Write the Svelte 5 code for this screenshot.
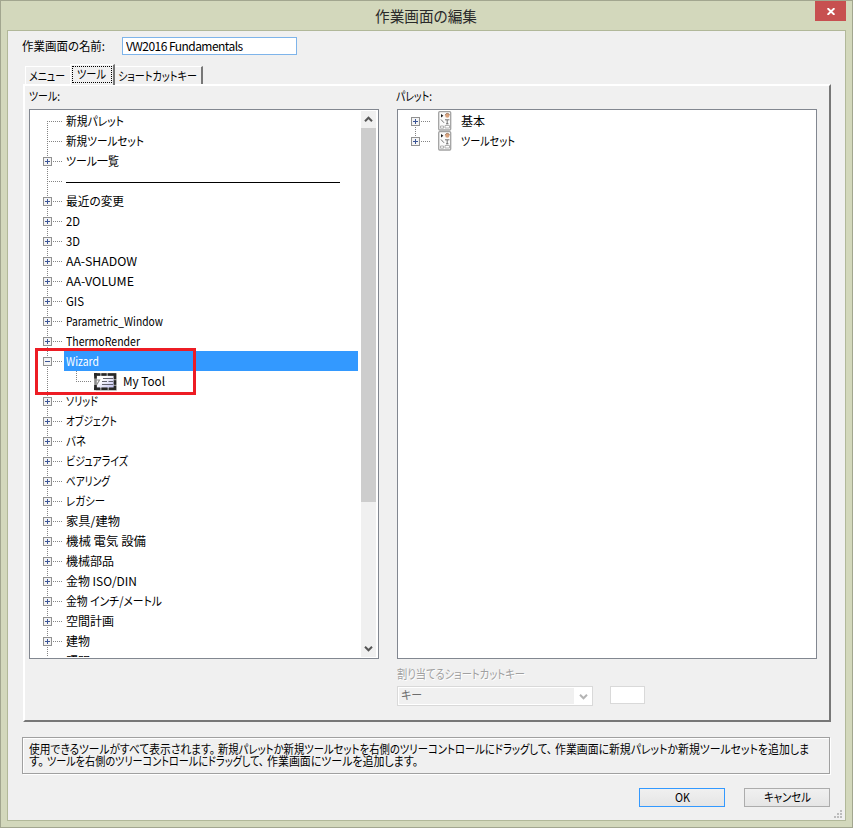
<script lang="ts">
  interface TreeItem {
    label: string;
    width: number;
    leaf?: boolean;
    separator?: boolean;
    child?: boolean;
  }

  const tools: TreeItem[] = [
    { label: '新規パレット', width: 58, leaf: true },
    { label: '新規ツールセット', width: 78, leaf: true },
    { label: 'ツール一覧', width: 53 },
    { label: '', width: 0, leaf: true, separator: true },
    { label: '最近の変更', width: 58 },
    { label: '2D', width: 14 },
    { label: '3D', width: 14 },
    { label: 'AA-SHADOW', width: 71 },
    { label: 'AA-VOLUME', width: 68 },
    { label: 'GIS', width: 18 },
    { label: 'Parametric_Window', width: 97 },
    { label: 'ThermoRender', width: 74 },
    { label: 'Wizard', width: 33 },
    { label: 'My Tool', width: 42, child: true },
    { label: 'ソリッド', width: 32 },
    { label: 'オブジェクト', width: 51 },
    { label: 'バネ', width: 20 },
    { label: 'ビジュアライズ', width: 62 },
    { label: 'ベアリング', width: 44 },
    { label: 'レガシー', width: 39 },
    { label: '家具/建物', width: 54 },
    { label: '機械 電気 設備', width: 80 },
    { label: '機械部品', width: 48 },
    { label: '金物 ISO/DIN', width: 71 },
    { label: '金物 インチ/メートル', width: 96 },
    { label: '空間計画', width: 48 },
    { label: '建物', width: 24 },
    { label: '照明', width: 24 }
  ];

  const palettes = [
    { label: '基本', width: 24 },
    { label: 'ツールセット', width: 54 }
  ];

  const help = [
    [
      { text: '使用できるツールがすべて表示されます。', width: 186 },
      { text: '新規パレットか新規ツールセットを右側のツリーコントロールにドラッグして、', width: 334 },
      { text: '作業画面に新規パレットか新規ツールセットを追加しま', width: 254 }
    ],
    [
      { text: 'す。', width: 15 },
      { text: 'ツールを右側のツリーコントロールにドラッグして、', width: 217 },
      { text: '作業画面にツールを追加します。', width: 151 }
    ]
  ];

  let activeTab = $state('ツール');
  let workspaceName = $state('VW2016 Fundamentals');
  let selected = $state('Wizard');

  // Condense a label to the width the dialog font would give it
  function fit(node: HTMLElement, width: number) {
    const natural = node.getBoundingClientRect().width;
    if (natural > 0) {
      node.style.transform = `scaleX(${width / natural})`;
      node.style.marginRight = `${width - natural}px`;
    }
  }
</script>

{#snippet expander(open: boolean)}
  <svg class="expander" width="9" height="9" viewBox="0 0 9 9" shape-rendering="crispEdges">
    <rect x="0.5" y="0.5" width="8" height="8" fill="#f4f4f4" stroke="#919191" />
    <path d="M2 4.5h5" stroke="#3c5596" />
    {#if !open}<path d="M4.5 2v5" stroke="#3c5596" />{/if}
  </svg>
{/snippet}

{#snippet chevron(up: boolean, color: string)}
  <svg width="9" height="7" viewBox="0 0 9 7">
    <path d={up ? 'M1 5.2 4.5 1.7 8 5.2' : 'M1 1.8 4.5 5.3 8 1.8'} fill="none" stroke={color} stroke-width="2" />
  </svg>
{/snippet}

<div class="window">
  <header class="titlebar">
    <h1><span class="t" use:fit={102}>作業画面の編集</span></h1>
    <button class="close" aria-label="閉じる">
      <svg width="8" height="7" viewBox="0 0 8 7"><path d="M.6.2 7.4 6.8M7.4.2.6 6.8" stroke="#fff" stroke-width="1.9" /></svg>
    </button>
  </header>

  <main class="client">
    <div class="name-row">
      <label for="workspace"><span class="t" use:fit={83}>作業画面の名前:</span></label>
      <div class="name-box">
        <input id="workspace" bind:value={workspaceName} />
      </div>
    </div>

    <div class="tabs" role="tablist">
      <button class="tab menu" role="tab" aria-selected={activeTab === 'メニュー'} onclick={() => (activeTab = 'メニュー')}>
        <span class="t" use:fit={36}>メニュー</span>
      </button>
      <button class="tab tool" role="tab" aria-selected={activeTab === 'ツール'} onclick={() => (activeTab = 'ツール')}>
        <span class="focus"><span class="t" use:fit={29}>ツール</span></span>
      </button>
      <button class="tab keys" role="tab" aria-selected={activeTab === 'ショートカットキー'} onclick={() => (activeTab = 'ショートカットキー')}>
        <span class="t" use:fit={79}>ショートカットキー</span>
      </button>
    </div>

    <section class="panel">
      <div class="column left">
        <div class="caption"><span class="t" use:fit={31}>ツール:</span></div>
        <div class="listbox">
          <div class="tree">
            {#each tools as item}
              <div class="row" class:first={item === tools[0]} class:child={item.child}>
                <div class="lines">
                  {#if !item.leaf && !item.child}{@render expander(item.label === 'Wizard')}{/if}
                </div>
                {#if item.separator}
                  <hr />
                {:else if item.child}
                  <div class="elbow"></div>
                  <svg class="tool-icon" width="23" height="18" viewBox="0 0 23 18">
                    <defs>
                      <linearGradient id="face" x1="0" y1="0" x2="1" y2="1">
                        <stop offset="0.35" stop-color="#fff" />
                        <stop offset="1" stop-color="#b9b9f2" />
                      </linearGradient>
                    </defs>
                    <rect x="1.5" y="1.5" width="19.5" height="14.5" fill="url(#face)" stroke="#8c8c8c" stroke-width="2.6" />
                    <path d="M0 1.5h6M7.5 1.5h5M14 1.5h8.3M1.5 0v5.5M1.5 12v5M0 15.8h6M7.5 15.8h6M15 15.8h7.3M21 1v5M21 7.2v4.5M21 13v4" stroke="#282828" stroke-width="2.6" />
                    <path d="M1 7h4.5L2.5 12" fill="none" stroke="#909090" stroke-width="1.2" />
                    <path d="M9 5.5h10M8 8.5h5M14.5 8.5H19M8 11.5h11" stroke="#62626e" stroke-width="1" />
                    <path d="M22.5 2v15.5H2" fill="none" stroke="#aaa" stroke-opacity=".5" />
                  </svg>
                  <span class="t child-label" use:fit={item.width}>{item.label}</span>
                {:else}
                  <button class="node" class:selected={selected === item.label} onclick={() => (selected = item.label)}>
                    <span class="t" use:fit={item.width}>{item.label}</span>
                  </button>
                {/if}
              </div>
            {/each}
          </div>
          <div class="scrollbar">
            <div class="arrow">{@render chevron(true, '#555')}</div>
            <div class="thumb"></div>
            <div class="track"></div>
            <div class="arrow">{@render chevron(false, '#555')}</div>
          </div>
          <div class="highlight"></div>
        </div>
      </div>

      <div class="column right">
        <div class="caption"><span class="t" use:fit={36}>パレット:</span></div>
        <div class="listbox">
          <div class="tree">
            {#each palettes as item, i}
              <div class="row" class:first={i === 0} class:last={i === palettes.length - 1}>
                <div class="lines">{@render expander(false)}</div>
                <svg class="palette-icon" width="14" height="20" viewBox="0 0 14 20">
                  <rect x="0.7" y="0.7" width="12" height="18.3" rx="1" fill="#fafafa" stroke="#a2a2a2" stroke-width="1.3" />
                  <path d="M3 3v3.4l2.4-1.7z" fill="#222" />
                  <circle cx="9.3" cy="4.7" r="2.1" fill="#d8a27d" />
                  <path d="M7.4 4.2c0-2.4 4-2.4 4 0" fill="none" stroke="#8a6248" stroke-width=".8" />
                  <path d="M3 8.5l3 3.3M7 8.8h4.4M9.2 9v4M8 12.8h2.5" stroke="#666" stroke-width=".9" />
                  <path d="M2.5 15h3v2.2h-3zM7 14.5h4.5V17H7z" fill="#fff" stroke="#aaa" stroke-width=".9" />
                </svg>
                <span class="t" use:fit={item.width}>{item.label}</span>
              </div>
            {/each}
          </div>
        </div>
        <div class="shortcut-label"><span class="t" use:fit={128}>割り当てるショートカットキー</span></div>
        <div class="shortcut-row">
          <div class="combo">
            <div class="combo-value"><span class="t" use:fit={21}>キー</span></div>
            <div class="combo-arrow">{@render chevron(false, '#b4b4b4')}</div>
          </div>
          <div class="key-box"></div>
        </div>
      </div>
    </section>

    <div class="help">
      {#each help as line}
        <div class="help-line">
          {#each line as part}<span class="t" use:fit={part.width}>{part.text}</span>{/each}
        </div>
      {/each}
    </div>

    <footer class="actions">
      <button class="push default"><span class="t" use:fit={15}>OK</span></button>
      <button class="push"><span class="t" use:fit={47}>キャンセル</span></button>
    </footer>

    <svg class="grip" width="8" height="8" viewBox="0 0 8 8" shape-rendering="crispEdges">
      <path d="M6 0h2v2H6zM3 3h2v2H3zM6 3h2v2H6zM0 6h2v2H0zM3 6h2v2H3zM6 6h2v2H6z" fill="#bcbcbc" />
    </svg>
  </main>
</div>

<style>
  :global(body) {
    margin: 0;
  }

  * {
    box-sizing: border-box;
  }

  .window {
    width: 853px;
    height: 828px;
    padding: 0 6px;
    border: 1px solid #a2a68f;
    background: #d3d8bc;
    font-family: 'Noto Sans CJK JP', sans-serif;
    font-size: 12px;
    line-height: 20px;
    color: #000;
    overflow: hidden;
  }

  button,
  input {
    margin: 0;
    padding: 0;
    border: none;
    background: none;
    font: inherit;
    color: inherit;
  }

  .t {
    display: inline-block;
    flex: none;
    white-space: nowrap;
    transform-origin: 0 50%;
    font-feature-settings: 'palt';
  }

  .titlebar {
    display: flex;
    justify-content: space-between;
    height: 29px;
  }

  h1 {
    margin: 0;
    padding: 5px 0 0 368px;
    font-size: 15px;
    font-weight: 400;
    line-height: 20px;
    color: #2a2a2a;
  }

  .close {
    display: flex;
    align-items: center;
    justify-content: center;
    width: 31px;
    height: 20px;
    padding-top: 1px;
    background: #c75050;
  }

  .client {
    position: relative;
    width: 839px;
    height: 791px;
    padding: 6px 14px 0 15px;
    border: 1px solid #b1b899;
    background: #f0f0f0;
  }

  .name-row {
    display: flex;
    height: 29px;
  }

  .name-row label {
    width: 100px;
    margin-left: -1px;
    line-height: 18px;
  }

  .name-box {
    width: 175px;
    height: 18px;
    border: 1px solid #7eb4ea;
    background: #fff;
  }

  .name-box input {
    display: block;
    width: 160px;
    height: 16px;
    padding-left: 3px;
    outline: none;
    line-height: 16px;
    letter-spacing: -0.55px;
  }

  .tabs {
    display: flex;
    align-items: flex-end;
    height: 18px;
    padding-left: 2px;
  }

  .tab {
    display: flex;
    height: 18px;
    line-height: 17px;
    border-top: 1px solid #fff;
    border-left: 1px solid #fff;
    text-align: left;
  }

  .menu {
    width: 45px;
    padding-left: 3px;
  }

  .tool {
    position: relative;
    z-index: 1;
    width: 45px;
    height: 21px;
    margin-bottom: -1px;
    padding: 1px;
    border-right: 2px solid #777;
    background: #f0f0f0;
  }

  .focus {
    width: 41px;
    height: 17px;
    padding-left: 4px;
    border: 1px dotted #000;
    line-height: 13px;
  }

  .keys {
    width: 88px;
    padding-left: 3px;
    border-left: none;
    border-right: 2px solid #777;
  }

  .panel {
    display: flex;
    gap: 18px;
    width: 808px;
    height: 638px;
    padding-left: 4px;
    border: 2px solid #777;
    border-top-color: #fff;
    border-left-color: #fff;
  }

  .left {
    width: 350px;
  }

  .right {
    width: 420px;
  }

  .caption {
    height: 23px;
  }

  .right .caption {
    margin-left: -1px;
  }

  .listbox {
    position: relative;
    display: flex;
    height: 550px;
    padding: 1px;
    border: 1px solid #828790;
    background: #fff;
  }

  .tree {
    flex: 1;
    height: 546px;
    overflow: hidden;
  }

  .row {
    display: flex;
    height: 20px;
  }

  /* dotted connector lines are drawn as 1px-on 1px-off gradients */
  .lines {
    flex: none;
    width: 33px;
    height: 20px;
    background:
      repeating-linear-gradient(to right, #848484 0 1px, transparent 1px 2px) 16px 10px / 15px 1px no-repeat,
      repeating-linear-gradient(to bottom, #848484 0 1px, transparent 1px 2px) 16px 0 / 1px 20px no-repeat;
  }

  .row.first .lines {
    background-position: 16px 10px, 16px 10px;
  }

  .row.child .lines {
    width: 45px;
    background-size: 0 0, 1px 20px;
  }

  .row.last .lines {
    background-size: 15px 1px, 1px 10px;
  }

  .expander {
    display: block;
    margin: 6px 0 0 12px;
  }

  .node {
    width: 294px;
    height: 20px;
    padding-left: 2px;
    text-align: left;
  }

  .node.selected {
    background: #3399ff;
    color: #fff;
  }

  hr {
    width: 274px;
    height: 1px;
    margin: 11px 0 0 2px;
    border: none;
    background: #000;
  }

  .elbow {
    width: 15px;
    height: 11px;
    background:
      repeating-linear-gradient(to right, #848484 0 1px, transparent 1px 2px) 0 10px / 15px 1px no-repeat,
      repeating-linear-gradient(to bottom, #848484 0 1px, transparent 1px 2px) 0 0 / 1px 11px no-repeat;
  }

  .tool-icon {
    margin: 2px 0 0 3px;
  }

  .child-label {
    margin-left: 6px;
  }

  .scrollbar {
    display: flex;
    flex-direction: column;
    width: 16px;
    height: 546px;
    border-right: 1px solid #fff;
    background: #f0f0f0;
  }

  .arrow {
    display: flex;
    align-items: center;
    justify-content: center;
    height: 17px;
  }

  .thumb {
    height: 374px;
    background: #cdcdcd;
  }

  .track {
    flex: 1;
  }

  /* red callout frame around the expanded group */
  .highlight {
    position: absolute;
    left: 5px;
    top: 238px;
    width: 161px;
    height: 47px;
    border: 3px solid #ed1c24;
    pointer-events: none;
  }

  .palette-icon {
    flex: none;
    margin: 0 9px 0 6px;
  }

  .shortcut-label {
    height: 27px;
    padding-top: 5px;
    color: #a0a0a0;
    text-shadow: 1px 1px 0 #fff;
  }

  .shortcut-row {
    display: flex;
    gap: 17px;
  }

  .combo {
    display: flex;
    width: 196px;
    height: 20px;
    padding: 1px;
    border: 1px solid #d9d9d9;
    background: #fff;
  }

  .combo-value {
    width: 175px;
    padding-left: 2px;
    background: #f0f0f0;
    line-height: 14px;
    color: #6d6d6d;
  }

  .combo-arrow {
    display: flex;
    flex: 1;
    align-items: center;
    justify-content: center;
    padding-left: 2px;
  }

  .key-box {
    width: 35px;
    height: 18px;
    border: 1px solid #d9d9d9;
    background: #fff;
  }

  .help {
    width: 808px;
    height: 37px;
    margin: 15px 0 0 -1px;
    padding: 5px 6px;
    border: 1px solid #a0a0a0;
    box-shadow: 1px 1px 0 #fff, inset 1px 1px 0 #fff;
    line-height: 12px;
  }

  .help-line {
    display: flex;
    gap: 3px;
    height: 12px;
  }

  .actions {
    display: flex;
    justify-content: flex-end;
    gap: 19px;
    width: 807px;
    margin-top: 14px;
  }

  .push {
    display: flex;
    justify-content: center;
    width: 86px;
    height: 19px;
    border: 1px solid #acacac;
    background: linear-gradient(#f0f0f0, #e5e5e5);
    line-height: 15px;
  }

  .push.default {
    border-color: #3399ff;
  }

  .grip {
    position: absolute;
    right: 3px;
    bottom: 2px;
  }
</style>
